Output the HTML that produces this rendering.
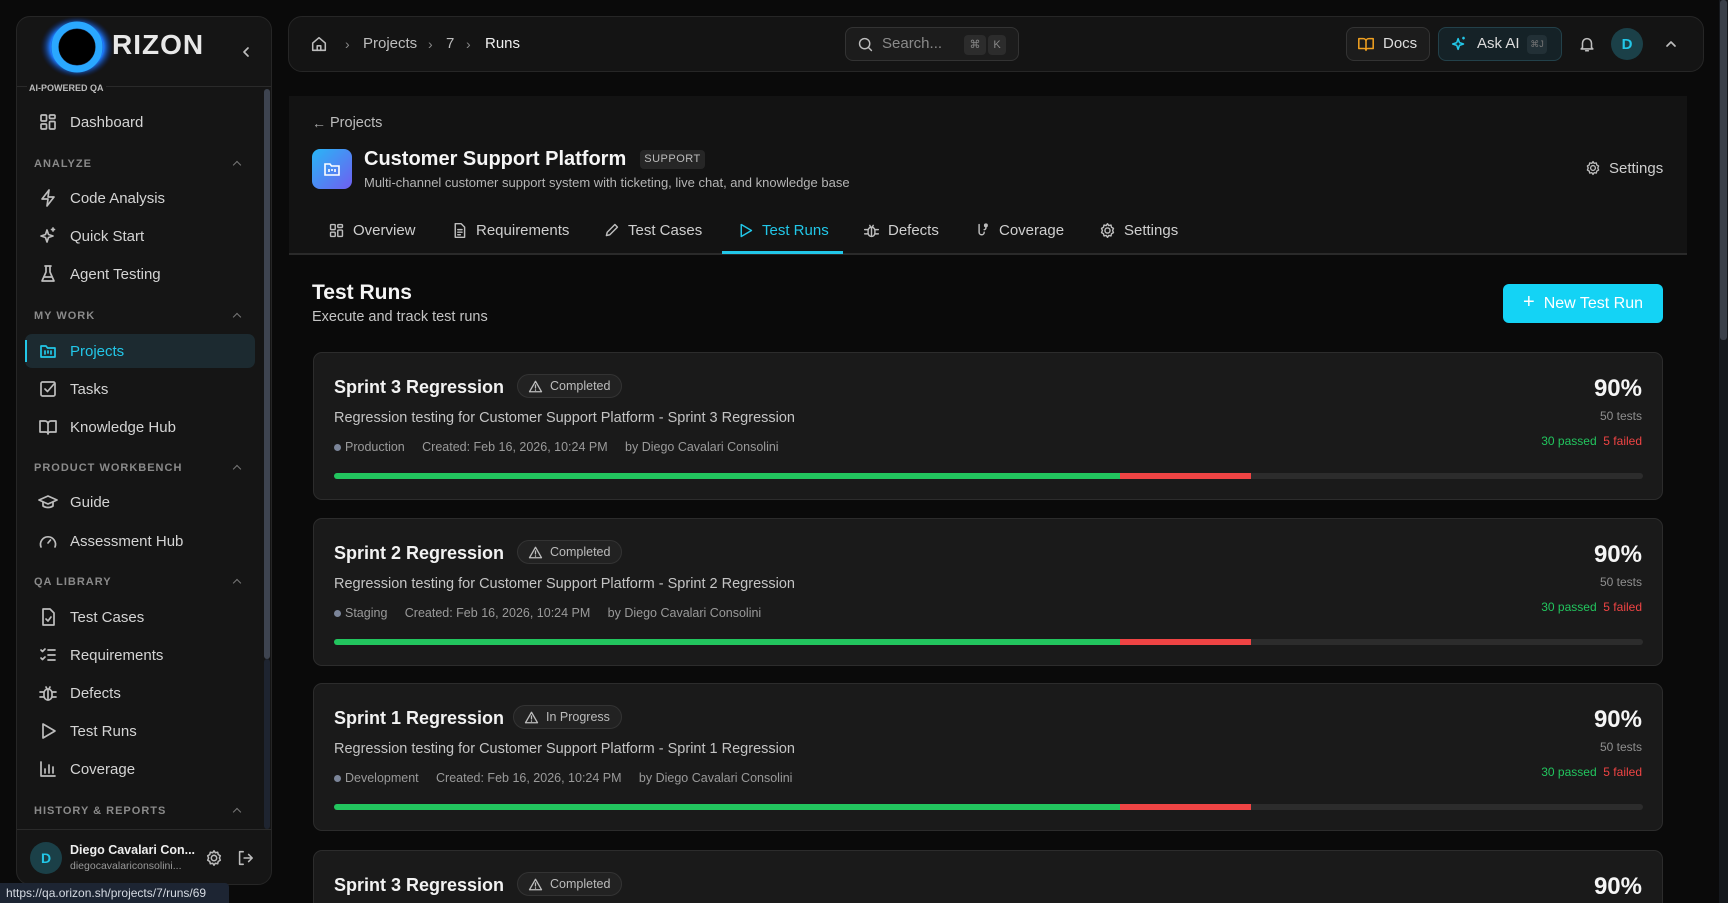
<!DOCTYPE html>
<html><head><meta charset="utf-8"><style>
*{margin:0;padding:0;box-sizing:border-box}
html,body{width:1728px;height:903px;overflow:hidden}
body{background:#0a0a0a;font-family:"Liberation Sans",sans-serif;color:#e5e5e5;position:relative}
#wrap{position:absolute;left:0;top:0;width:1728px;height:903px;overflow:hidden}
.a{position:absolute}
.sb{left:16px;top:16px;width:256px;height:869px;background:#151515;border:1px solid #262626;border-radius:14px;overflow:hidden}
.it{position:absolute;left:0;width:240px;height:34px;display:flex;align-items:center;font-size:15px;color:#d4d4d4}
.it svg{position:absolute;left:21px;width:20px;height:20px;stroke:#bdbdbd;fill:none;stroke-width:1.7;stroke-linecap:round;stroke-linejoin:round}
.it span{position:absolute;left:53px}
.sh{position:absolute;left:17px;width:210px;font-size:11px;font-weight:bold;letter-spacing:1px;color:#8a8a8a}
.sh:after{content:"";position:absolute;right:4px;top:4px;width:5px;height:5px;border-left:1.3px solid #777;border-top:1.3px solid #777;transform:rotate(45deg)}
.tb{left:288px;top:16px;width:1416px;height:56px;background:#141414;border:1px solid #262626;border-radius:14px}
.ic{fill:none;stroke:#bdbdbd;stroke-width:1.7;stroke-linecap:round;stroke-linejoin:round}
.tab{position:absolute;top:219px;height:22px;font-size:15px;color:#cfcfcf;display:flex;align-items:center}
.tab svg{width:17px;height:17px;margin-right:8px}
.card{position:absolute;left:313px;width:1350px;height:148px;background:#1a1a1a;border:1px solid #2c2c2c;border-radius:9px}
.ct{position:absolute;left:20px;top:24px;font-size:18px;font-weight:bold;color:#f2f2f2}
.bd{position:absolute;top:21px;height:24px;border:1px solid #333;background:#222;border-radius:12px;font-size:12.5px;color:#bcbcbc;display:flex;align-items:center;padding:0 11px 0 10px}
.bd svg{width:15px;height:15px;margin-right:7px}
.ds{position:absolute;left:20px;top:57px;font-size:14.5px;color:#c4c4c4}
.mt{position:absolute;left:20px;top:87px;font-size:12.5px;color:#9a9a9a;white-space:pre}
.mt i{display:inline-block;width:7px;height:7px;border-radius:50%;background:#7b8599;margin-right:4px;vertical-align:0}
.bar{position:absolute;left:20px;top:120px;width:1309px;height:6px;border-radius:3px;background:#2c2c2c;overflow:hidden}
.bar b{position:absolute;top:0;height:6px}
.pc{position:absolute;right:20px;top:22px;font-size:24px;font-weight:bold;color:#f5f5f5}
.nt{position:absolute;right:20px;top:56px;font-size:12px;color:#8f8f8f}
.pf{position:absolute;right:20px;top:81px;font-size:12px;white-space:pre}
</style></head><body><div id="wrap">

<div class="a sb">
  <svg class="a" style="left:22px;top:-3px" width="76" height="66" viewBox="0 0 76 66"><defs><radialGradient id="g" cx="50%" cy="50%" r="50%"><stop offset="50%" stop-color="#0a3a9a" stop-opacity="0"/><stop offset="72%" stop-color="#1e7bff"/><stop offset="100%" stop-color="#0b1a50" stop-opacity="0"/></radialGradient></defs><ellipse cx="38" cy="33" rx="37" ry="31" fill="url(#g)"/><circle cx="38" cy="33" r="22" fill="none" stroke="#2aa8ff" stroke-width="7"/><circle cx="38" cy="33" r="18" fill="#000"/></svg>
  <div class="a" style="left:95px;top:12px;font-size:28px;font-weight:bold;color:#e8e8e8;letter-spacing:1px">RIZON</div>
  <svg class="a ic" style="left:222px;top:28px" width="14" height="14" viewBox="0 0 14 14"><path d="M9 3L5 7l4 4"/></svg>
  <div class="a" style="left:0;top:69px;width:256px;height:1px;background:#2a2a2a"></div>
  <div class="a" style="left:10px;top:66px;font-size:9px;font-weight:bold;color:#bbb;background:#151515;padding:0 2px">AI-POWERED QA</div>
  <div class="a" style="left:247px;top:72px;width:6px;height:570px;background:#3e4450;border-radius:3px"></div>
  <div class="a" style="left:247px;top:642px;width:6px;height:170px;background:#1e2430;border-radius:3px"></div>

  <div class="it" style="top:88px"><svg viewBox="0 0 20 20"><rect x="3" y="3" width="5.5" height="6" rx="1"/><rect x="11.5" y="3" width="5.5" height="3.5" rx="1"/><rect x="3" y="12" width="5.5" height="5" rx="1"/><rect x="11.5" y="9.5" width="5.5" height="7.5" rx="1"/></svg><span>Dashboard</span></div>
  <div class="sh" style="top:141px">ANALYZE</div>
  <div class="it" style="top:164px"><svg viewBox="0 0 20 20"><path d="M11 2L4 11h6l-1 7 7-9h-6z"/></svg><span>Code Analysis</span></div>
  <div class="it" style="top:202px"><svg viewBox="0 0 20 20"><path d="M9 4l1.5 4.5L15 10l-4.5 1.5L9 16l-1.5-4.5L3 10l4.5-1.5z"/><path d="M15 2v3M13.5 3.5h3"/></svg><span>Quick Start</span></div>
  <div class="it" style="top:240px"><svg viewBox="0 0 20 20"><path d="M7 2h6M8 2v6l-4 9h12l-4-9V2M6 13h8"/></svg><span>Agent Testing</span></div>
  <div class="sh" style="top:293px">MY WORK</div>
  <div class="a" style="left:8px;top:317px;width:230px;height:34px;background:#1c2a30;border-radius:7px"></div>
  <div class="a" style="left:8px;top:323px;width:2px;height:22px;background:#22c7e8"></div>
  <div class="it" style="top:317px;color:#22c7e8"><svg viewBox="0 0 20 20" style="stroke:#22c7e8"><path d="M3 5h5l1.5 2H17v9H3z"/><path d="M7 10v3M10 10v2M13 10v3"/></svg><span>Projects</span></div>
  <div class="it" style="top:355px"><svg viewBox="0 0 20 20"><rect x="3" y="3" width="14" height="14" rx="1.5"/><path d="M7 10l2.5 2.5L16 5"/></svg><span>Tasks</span></div>
  <div class="it" style="top:393px"><svg viewBox="0 0 20 20"><path d="M2 4h5a3 3 0 013 3v10a2 2 0 00-2-2H2zM18 4h-5a3 3 0 00-3 3v10a2 2 0 012-2h6z"/></svg><span>Knowledge Hub</span></div>
  <div class="sh" style="top:445px">PRODUCT WORKBENCH</div>
  <div class="it" style="top:468px"><svg viewBox="0 0 20 20"><path d="M1 8l9-4 9 4-9 4z"/><path d="M5 10v4c3 2 7 2 10 0v-4"/></svg><span>Guide</span></div>
  <div class="it" style="top:507px"><svg viewBox="0 0 20 20"><path d="M3 16a7.5 7.5 0 1114 0"/><path d="M10 12l2.5-3"/></svg><span>Assessment Hub</span></div>
  <div class="sh" style="top:559px">QA LIBRARY</div>
  <div class="it" style="top:583px"><svg viewBox="0 0 20 20"><path d="M5 2h7l4 4v12H5z"/><path d="M8 12l2 2 3-4"/></svg><span>Test Cases</span></div>
  <div class="it" style="top:621px"><svg viewBox="0 0 20 20"><path d="M3 5l1.5 1.5L7 4M3 13l1.5 1.5L7 12M10 5h7M10 10h7M10 15h7"/></svg><span>Requirements</span></div>
  <div class="it" style="top:659px"><svg viewBox="0 0 20 20"><rect x="6" y="6" width="8" height="11" rx="4"/><path d="M8 4l1 2M12 4l-1 2M2 9h4M14 9h4M2 14h4M14 14h4M10 7v10"/></svg><span>Defects</span></div>
  <div class="it" style="top:697px"><svg viewBox="0 0 20 20"><path d="M5 3l12 7-12 7z"/></svg><span>Test Runs</span></div>
  <div class="it" style="top:735px"><svg viewBox="0 0 20 20"><path d="M3 3v14h14M7 14v-4M11 14V6M15 14v-6"/></svg><span>Coverage</span></div>
  <div class="sh" style="top:788px">HISTORY &amp; REPORTS</div>
  <div class="a" style="left:0;top:812px;width:256px;height:1px;background:#2a2a2a"></div>
  <div class="a" style="left:13px;top:825px;width:32px;height:32px;border-radius:50%;background:#1b4048;color:#22c7e8;font-size:14px;font-weight:bold;display:flex;align-items:center;justify-content:center">D</div>
  <div class="a" style="left:53px;top:826px;font-size:12.5px;font-weight:bold;color:#eee">Diego Cavalari Con...</div>
  <div class="a" style="left:53px;top:843px;font-size:10.5px;color:#999">diegocavalariconsolini...</div>
  <svg class="a ic" style="left:188px;top:832px" width="18" height="18" viewBox="0 0 20 20"><circle cx="10" cy="10" r="3"/><path d="M10 2l1.5 2.2 2.6-.6.6 2.6L17 7.5 16 10l1 2.5-2.3 1.3-.6 2.6-2.6-.6L10 18l-1.5-2.2-2.6.6-.6-2.6L3 12.5 4 10 3 7.5l2.3-1.3.6-2.6 2.6.6z"/></svg>
  <svg class="a ic" style="left:219px;top:832px" width="18" height="18" viewBox="0 0 20 20"><path d="M8 3H4v14h4M9 10h9M14 6l4 4-4 4"/></svg>
</div>
<div class="a" style="left:0;top:883px;width:229px;height:20px;background:#1d2533;color:#d6dbe3;font-size:12px;padding:3px 0 0 6px;border-top-right-radius:4px">https://qa.orizon.sh/projects/7/runs/69</div>

<div class="a tb"></div>
<svg class="a ic" style="left:310px;top:35px" width="18" height="18" viewBox="0 0 20 20"><path d="M3 9l7-6 7 6v8H3z"/><path d="M8 17v-5h4v5"/></svg>
<div class="a" style="left:345px;top:36px;font-size:14px;color:#888">›</div>
<div class="a" style="left:363px;top:35px;font-size:15px;color:#bdbdbd">Projects</div>
<div class="a" style="left:428px;top:36px;font-size:14px;color:#888">›</div>
<div class="a" style="left:446px;top:35px;font-size:15px;color:#bdbdbd">7</div>
<div class="a" style="left:466px;top:36px;font-size:14px;color:#888">›</div>
<div class="a" style="left:485px;top:35px;font-size:15px;color:#f0f0f0">Runs</div>
<div class="a" style="left:845px;top:27px;width:174px;height:34px;border:1px solid #333;border-radius:8px;background:#1c1c1c"></div>
<svg class="a ic" style="left:857px;top:36px" width="17" height="17" viewBox="0 0 20 20"><circle cx="9" cy="9" r="6"/><path d="M13.5 13.5L17 17"/></svg>
<div class="a" style="left:882px;top:35px;font-size:15px;color:#8a8a8a">Search...</div>
<div class="a" style="left:964px;top:35px;width:22px;height:20px;background:#2c2c2c;border-radius:4px;font-size:11px;color:#888;text-align:center;line-height:20px">⌘</div>
<div class="a" style="left:988px;top:35px;width:18px;height:20px;background:#2c2c2c;border-radius:4px;font-size:11px;color:#888;text-align:center;line-height:20px">K</div>
<div class="a" style="left:1346px;top:27px;width:84px;height:34px;border:1px solid #333;border-radius:8px;background:#1c1c1c"></div>
<svg class="a" style="left:1357px;top:35px" width="18" height="18" viewBox="0 0 20 20" fill="none" stroke="#f0a020" stroke-width="1.7" stroke-linejoin="round"><path d="M2 4h5a3 3 0 013 3v10a2 2 0 00-2-2H2zM18 4h-5a3 3 0 00-3 3v10a2 2 0 012-2h6z"/></svg>
<div class="a" style="left:1383px;top:35px;font-size:15px;color:#ddd">Docs</div>
<div class="a" style="left:1438px;top:27px;width:124px;height:34px;border:1px solid #23414a;border-radius:8px;background:#152227"></div>
<svg class="a" style="left:1450px;top:35px" width="18" height="18" viewBox="0 0 20 20" fill="none" stroke="#22c7e8" stroke-width="1.7" stroke-linejoin="round"><path d="M9 4l1.5 4.5L15 10l-4.5 1.5L9 16l-1.5-4.5L3 10l4.5-1.5z"/><path d="M15 2v3M13.5 3.5h3"/></svg>
<div class="a" style="left:1477px;top:35px;font-size:15px;color:#ddd">Ask AI</div>
<div class="a" style="left:1527px;top:35px;width:20px;height:19px;background:#223036;border-radius:4px;font-size:9px;color:#777;text-align:center;line-height:19px">⌘J</div>
<svg class="a ic" style="left:1578px;top:35px" width="18" height="18" viewBox="0 0 20 20"><path d="M5 14V9a5 5 0 0110 0v5l1.5 1.5h-13zM8.5 17.5h3"/></svg>
<div class="a" style="left:1611px;top:28px;width:32px;height:32px;border-radius:50%;background:#1b4048;color:#22c7e8;font-size:15px;font-weight:bold;display:flex;align-items:center;justify-content:center">D</div>
<svg class="a ic" style="left:1664px;top:37px" width="14" height="14" viewBox="0 0 14 14"><path d="M3 9l4-4 4 4"/></svg>
<div class="a" style="left:1719px;top:0;width:9px;height:903px;background:#15181d"></div>
<div class="a" style="left:1720px;top:0;width:7px;height:340px;background:#3a404a;border-radius:3px"></div>

<div class="a" style="left:289px;top:96px;width:1398px;height:159px;background:#131313;border-bottom:2px solid #2a2a2a"></div>
<div class="a" style="left:312px;top:115px;font-size:14px;color:#aaa">←</div>
<div class="a" style="left:330px;top:115px;font-size:14.5px;color:#bdbdbd">Projects</div>
<div class="a" style="left:312px;top:149px;width:40px;height:40px;border-radius:8px;background:linear-gradient(135deg,#28b6f6,#6f5ef0)"></div>
<svg class="a" style="left:322px;top:159px" width="20" height="20" viewBox="0 0 20 20" fill="none" stroke="#fff" stroke-width="1.6"><path d="M3 5h5l1.5 2H17v9H3z"/><path d="M7 10v3M10 10v2M13 10v3"/></svg>
<div class="a" style="left:364px;top:148px;font-size:20px;font-weight:bold;color:#f5f5f5">Customer Support Platform</div>
<div class="a" style="left:640px;top:150px;width:65px;height:19px;background:#262626;border-radius:4px;font-size:11px;color:#bbb;text-align:center;line-height:19px;letter-spacing:.5px">SUPPORT</div>
<div class="a" style="left:364px;top:175px;font-size:13px;color:#b5b5b5">Multi-channel customer support system with ticketing, live chat, and knowledge base</div>
<svg class="a ic" style="left:1585px;top:160px" width="16" height="16" viewBox="0 0 20 20"><circle cx="10" cy="10" r="3"/><path d="M10 2l1.5 2.2 2.6-.6.6 2.6L17 7.5 16 10l1 2.5-2.3 1.3-.6 2.6-2.6-.6L10 18l-1.5-2.2-2.6.6-.6-2.6L3 12.5 4 10 3 7.5l2.3-1.3.6-2.6 2.6.6z"/></svg>
<div class="a" style="left:1609px;top:160px;font-size:15px;color:#cfcfcf">Settings</div>

<div class="tab" style="left:328px"><svg class="ic" viewBox="0 0 20 20"><rect x="3" y="3" width="5.5" height="6" rx="1"/><rect x="11.5" y="3" width="5.5" height="3.5" rx="1"/><rect x="3" y="12" width="5.5" height="5" rx="1"/><rect x="11.5" y="9.5" width="5.5" height="7.5" rx="1"/></svg>Overview</div>
<div class="tab" style="left:451px"><svg class="ic" viewBox="0 0 20 20"><path d="M5 2h7l4 4v12H5z"/><path d="M8 9h5M8 12h5M8 15h3"/></svg>Requirements</div>
<div class="tab" style="left:603px"><svg class="ic" viewBox="0 0 20 20"><path d="M14 3l3 3-9 9-4 1 1-4z"/></svg>Test Cases</div>
<div class="tab" style="left:737px;color:#22c7e8"><svg class="ic" style="stroke:#22c7e8" viewBox="0 0 20 20"><path d="M5 3l12 7-12 7z"/></svg>Test Runs</div>
<div class="tab" style="left:863px"><svg class="ic" viewBox="0 0 20 20"><rect x="6" y="6" width="8" height="11" rx="4"/><path d="M8 4l1 2M12 4l-1 2M2 9h4M14 9h4M2 14h4M14 14h4M10 7v10"/></svg>Defects</div>
<div class="tab" style="left:974px"><svg class="ic" viewBox="0 0 20 20"><path d="M6 3v9a3 3 0 006 0M14 3v4a2 2 0 01-2 2"/><circle cx="14" cy="4" r="1.5"/></svg>Coverage</div>
<div class="tab" style="left:1099px"><svg class="ic" viewBox="0 0 20 20"><circle cx="10" cy="10" r="3"/><path d="M10 2l1.5 2.2 2.6-.6.6 2.6L17 7.5 16 10l1 2.5-2.3 1.3-.6 2.6-2.6-.6L10 18l-1.5-2.2-2.6.6-.6-2.6L3 12.5 4 10 3 7.5l2.3-1.3.6-2.6 2.6.6z"/></svg>Settings</div>
<div class="a" style="left:722px;top:251px;width:121px;height:3px;background:#22c7e8"></div>

<div class="a" style="left:312px;top:281px;font-size:21px;font-weight:bold;color:#f5f5f5">Test Runs</div>
<div class="a" style="left:312px;top:309px;font-size:14.5px;color:#c4c4c4">Execute and track test runs</div>
<div class="a" style="left:1503px;top:284px;width:160px;height:39px;border-radius:6px;background:#14d3f5;display:flex;align-items:center;justify-content:center;font-size:16px;color:#fff"><span style="font-size:20px;margin-right:9px;margin-top:-2px">+</span>New Test Run</div>

<div class="card" style="top:352px"><div class="ct">Sprint 3 Regression</div><div class="bd" style="left:203px"><svg class="ic" viewBox="0 0 20 20"><path d="M10 3l8 14H2z M10 8v4M10 14.5v.5"/></svg>Completed</div><div class="ds">Regression testing for Customer Support Platform - Sprint 3 Regression</div><div class="mt"><i></i>Production     Created: Feb 16, 2026, 10:24 PM     by Diego Cavalari Consolini</div><div class="bar"><b style="left:0;width:786px;background:#22c55e"></b><b style="left:786px;width:131px;background:#ef4444"></b></div><div class="pc">90%</div><div class="nt">50 tests</div><div class="pf"><span style="color:#22c55e">30 passed</span>  <span style="color:#ef4444">5 failed</span></div></div>

<div class="card" style="top:518px"><div class="ct">Sprint 2 Regression</div><div class="bd" style="left:203px"><svg class="ic" viewBox="0 0 20 20"><path d="M10 3l8 14H2z M10 8v4M10 14.5v.5"/></svg>Completed</div><div class="ds">Regression testing for Customer Support Platform - Sprint 2 Regression</div><div class="mt"><i></i>Staging     Created: Feb 16, 2026, 10:24 PM     by Diego Cavalari Consolini</div><div class="bar"><b style="left:0;width:786px;background:#22c55e"></b><b style="left:786px;width:131px;background:#ef4444"></b></div><div class="pc">90%</div><div class="nt">50 tests</div><div class="pf"><span style="color:#22c55e">30 passed</span>  <span style="color:#ef4444">5 failed</span></div></div>

<div class="card" style="top:683px"><div class="ct">Sprint 1 Regression</div><div class="bd" style="left:199px"><svg class="ic" viewBox="0 0 20 20"><path d="M10 3l8 14H2z M10 8v4M10 14.5v.5"/></svg>In Progress</div><div class="ds">Regression testing for Customer Support Platform - Sprint 1 Regression</div><div class="mt"><i></i>Development     Created: Feb 16, 2026, 10:24 PM     by Diego Cavalari Consolini</div><div class="bar"><b style="left:0;width:786px;background:#22c55e"></b><b style="left:786px;width:131px;background:#ef4444"></b></div><div class="pc">90%</div><div class="nt">50 tests</div><div class="pf"><span style="color:#22c55e">30 passed</span>  <span style="color:#ef4444">5 failed</span></div></div>

<div class="card" style="top:850px;height:60px;border-bottom:none;border-bottom-left-radius:0;border-bottom-right-radius:0"><div class="ct">Sprint 3 Regression</div><div class="bd" style="left:203px"><svg class="ic" viewBox="0 0 20 20"><path d="M10 3l8 14H2z M10 8v4M10 14.5v.5"/></svg>Completed</div><div class="pc">90%</div></div>

</div></body></html>
